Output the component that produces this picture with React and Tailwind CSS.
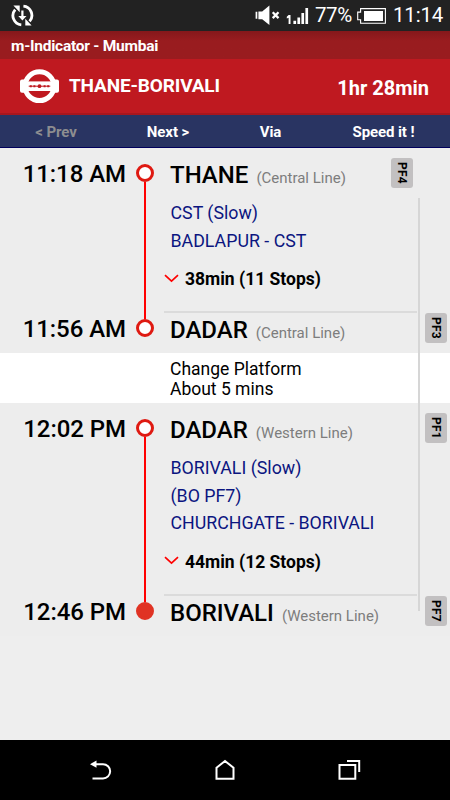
const tabs = [
  { label: "< Prev", style: "w-[112px] text-[#8d8d90]" },
  { label: "Next >", style: "w-[112px] text-white" },
  { label: "Via", style: "w-[93px] text-white" },
  { label: "Speed it !", style: "w-[133px] text-white" },
];

function StatusBar() {
  return (
    <div className="h-[31px] bg-[#222222] flex items-center pl-[11px] pr-[7px] text-white">
      <svg width="23" height="23" viewBox="0 0 23 23" fill="none" stroke="white" strokeWidth="2.8">
        <path d="M10.3 20.8A9.2 9.2 0 0 1 4.2 5.6" />
        <path d="M12.4 2.2A9.2 9.2 0 0 1 18.6 17.4" />
        <path d="M2.4 1.6h6.3v6.6zM20.6 21.4h-6.3v-6.6z" fill="white" stroke="none" />
        <path d="M10.3 6.5h2.2v5.6h3l-4.1 4.4-4.1-4.4h3z" fill="white" stroke="none" />
      </svg>
      <svg className="ml-auto" width="26" height="21" viewBox="0 0 26 21" fill="white">
        <path d="M.6 6.8h1.7v7H.6zM3.4 6.5h3.8L14.4.6v19.4l-7.2-5.7H3.4z" />
        <path d="M17.7 7.3l5.8 5.8M23.5 7.3l-5.8 5.8" stroke="white" strokeWidth="2.3" />
      </svg>
      <svg className="ml-[5px] mr-px" width="24" height="20" viewBox="0 0 24 20" fill="white">
        <path d="M2.6 9H4.5v9H2.6v-6.2l-1.8.7v-1.7zM7.4 14.7h2.7V18H7.400zM11.400 11.500h2.700V18h-2.700zM15.400 7h2.700v11h-2.700zM19.400 2h2.700v16h-2.700z" />
      </svg>
      <span className="ml-[4px] w-[38px] text-[20.5px] leading-[33px] tracking-[-0.4px] whitespace-nowrap">77%</span>
      <svg className="ml-[4px]" width="29" height="16" viewBox="0 0 29 16">
        <path d="M3.6.6h24.8v14.6H3.6v-3.4H.7V4.1h2.9z" fill="none" stroke="white" strokeWidth="1.1" />
        <path d="M7 3h19v10H7z" fill="white" />
      </svg>
      <span className="ml-[7px] w-[50px] text-[20.5px] leading-[33px] tracking-[-0.2px] whitespace-nowrap">11:14</span>
    </div>
  );
}

function Roundel() {
  return (
    <svg width="39" height="35" viewBox="0 0 39 35">
      <circle cx="19.5" cy="17.2" r="14.4" fill="none" stroke="white" strokeWidth="5" />
      <path d="M2 10.6h4v13.2H2a2 2 0 0 1-2-2v-9.2a2 2 0 0 1 2-2zM37 10.6h-4v13.2h4a2 2 0 0 0 2-2v-9.2a2 2 0 0 0-2-2z" fill="white" />
      <rect x="5" y="12.4" width="29" height="9.6" fill="white" />
      <path d="M8.7 17.2h21.6" stroke="#bf1920" strokeWidth="1" />
      <path d="M9.8 16.2h2v2h-2zM13.4 16.2h2v2h-2zM23.6 16.2h2v2h-2zM27.2 16.2h2v2h-2z" fill="#bf1920" />
      <circle cx="19.5" cy="17.2" r="1.9" fill="#bf1920" />
    </svg>
  );
}

function Stop({ time, name, line, platform, first, last, divider, inset }) {
  return (
    <div className="h-[50px] flex">
      <div className="w-[126px] pt-px text-right text-[24px] leading-[50px] tracking-[-0.05px] font-medium whitespace-nowrap">
        {time}
      </div>
      <div className="w-[38px] flex flex-col items-center">
        <div className={`w-[2px] flex-1 ${first ? "" : "bg-[#ff0000]"}`} />
        <div
          className={`size-[18px] rounded-full border-3 ${
            last ? "bg-[#e03324] border-[#e03324]" : "bg-white border-[#df1a12]"
          }`}
        />
        <div className={`w-[2px] flex-1 ${divider ? "" : "bg-[#ff0000]"}`} />
      </div>
      <div className="w-[253px] flex flex-col">
        <div className={`mt-[8px] h-[2px] ${divider ? "bg-[#dbdbdb]" : ""}`} />
        <div className="pl-[6px] flex items-baseline leading-[34px] whitespace-nowrap">
          <span className="text-[24px] font-medium">{name}</span>
          <span className="ml-[8px] text-[15px] text-[#7d7d7d]">{line}</span>
        </div>
      </div>
      <div className={`flex items-center ${inset ? "-ml-[26px]" : "ml-[8px]"}`}>
        <div className="w-[22px] h-[30px] rounded-[3px] bg-[#c2c0c1] flex items-center justify-center text-[12px] tracking-[0.2px] font-bold [writing-mode:vertical-rl]">
          {platform}
        </div>
      </div>
    </div>
  );
}

function Leg({ trains, duration }) {
  return (
    <div className="flex">
      <div className="w-[126px]" />
      <div className="w-[38px] flex justify-center">
        <div className="w-[2px] bg-[#ff0000]" />
      </div>
      <div className="pt-[1px] pb-[10px]">
        <div className="pl-[6.5px]">
          {trains.map((train) => (
            <div key={train} className="text-[17.8px] leading-[27.5px] text-[#0b1580] whitespace-nowrap">
              {train}
            </div>
          ))}
        </div>
        <div className="mt-[12px] h-[27px] flex items-center">
          <svg className="-mt-[3px]" width="15" height="9" viewBox="0 0 15 9" fill="none" stroke="#ff0000" strokeWidth="1.7">
            <path d="M1 1.2l6.5 6 6.5-6" />
          </svg>
          <span className="ml-[6px] text-[17.5px] leading-[27px] font-bold whitespace-nowrap">{duration}</span>
        </div>
      </div>
    </div>
  );
}

export default function App() {
  return (
    <div className="w-[450px] h-[800px] flex flex-col overflow-hidden bg-[#eeeeee] text-black font-[Roboto,sans-serif]">
      <StatusBar />
      <div className="h-[28px] bg-linear-to-b from-[#85181b] to-[#991c1f] to-35% pl-[11px] text-[15.5px] leading-[30px] tracking-[-0.25px] font-bold text-white">
        m-Indicator - Mumbai
      </div>
      <div className="h-[56px] bg-[#bf1920] border-b-2 border-[#a8161d] pl-[20px] pr-[21px] flex items-center text-white">
        <Roundel />
        <span className="ml-[10px] pt-px text-[19px] tracking-[-0.15px] font-bold">THANE-BORIVALI</span>
        <span className="ml-auto pt-[3px] text-[20px] font-bold">1hr 28min</span>
      </div>
      <div className="h-[33px] bg-[#293462] border-b border-[#00005c] flex">
        {tabs.map((tab) => (
          <div key={tab.label} className={`${tab.style} text-center text-[15px] leading-[35px] tracking-[-0.1px] font-bold`}>
            {tab.label}
          </div>
        ))}
      </div>

      {/* Journey timeline */}
      <div className="relative bg-[#ededed]">
        <Stop time="11:18 AM" name="THANE" line="(Central Line)" platform="PF4" first inset />
        <Leg trains={["CST (Slow)", "BADLAPUR - CST"]} duration="38min (11 Stops)" />
        <Stop time="11:56 AM" name="DADAR" line="(Central Line)" platform="PF3" divider />
        <div className="h-[50px] bg-white pl-[170px] pt-[7px] text-[17.5px] leading-[19.5px]">
          <p>Change Platform</p>
          <p>About 5 mins</p>
        </div>
        <Stop time="12:02 PM" name="DADAR" line="(Western Line)" platform="PF1" first />
        <Leg trains={["BORIVALI (Slow)", "(BO PF7)", "CHURCHGATE - BORIVALI"]} duration="44min (12 Stops)" />
        <Stop time="12:46 PM" name="BORIVALI" line="(Western Line)" platform="PF7" divider last />
        <div className="absolute top-[50px] bottom-[25px] left-[418px] w-[2px] bg-[#d6d6d6]" />
      </div>

      <div className="mt-auto h-[60px] bg-black flex items-center justify-between px-[89px] text-white">
        <svg width="23" height="22" viewBox="0 0 23 22" fill="none" stroke="white" strokeWidth="2">
          <path d="M5 5.2h9a7 7 0 0 1 0 14.3H3.5" />
          <path d="M7.5 1.4v7.4L1 5.2z" fill="white" stroke="none" />
        </svg>
        <svg width="20" height="22" viewBox="0 0 20 22" fill="none" stroke="white" strokeWidth="2">
          <path d="M1.5 8.8L10 2l8.5 6.8v10.9h-17z" />
        </svg>
        <svg width="23" height="22" viewBox="0 0 23 22" fill="none" stroke="white" strokeWidth="2">
          <path d="M1.5 6h15.8v13.7H1.5zM9 1.9h12.2V13" />
        </svg>
      </div>
    </div>
  );
}
